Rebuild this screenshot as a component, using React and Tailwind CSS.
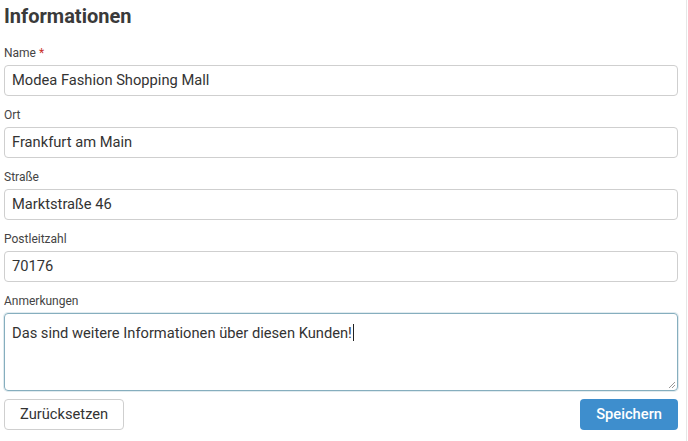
const fields = [
    { label: "Name", required: true, value: "Modea Fashion Shopping Mall" },
    { label: "Ort", value: "Frankfurt am Main" },
    { label: "Straße", value: "Marktstraße 46" },
    { label: "Postleitzahl", value: "70176" },
];

export default function App() {
    return (
        <div className="h-[441px] w-[688px] bg-white font-['Roboto',sans-serif] text-[#333]">
            <div className="h-full w-[687px] border-r border-[#e6e6e6] pl-[4px] pr-[8px]">
                <h2 className="h-[44px] pt-[2px] text-[20px] font-bold leading-[28px] text-[#3a3a3a]">Informationen</h2>

                {fields.map((f) => (
                    <div key={f.label} className="mb-[10px]">
                        <label className="mb-[4px] block h-[17px] pt-[1px] text-[12px] leading-[16px] text-[#444]">
                            {f.label}
                            {f.required && <span className="text-[#c9302c]"> *</span>}
                        </label>
                        <div className="flex h-[31px] items-center rounded-[4px] border border-[#cfcfcf] px-[7px] text-[14.7px] text-[#333]">
                            {f.value}
                        </div>
                    </div>
                ))}

                <div>
                    <label className="mb-[4px] block h-[17px] pt-[1px] text-[12px] leading-[16px] text-[#444]">Anmerkungen</label>
                    <div className="relative h-[78px] rounded-[4px] border border-[#86aebe] px-[7px] pt-[7px] text-[14.7px] leading-[22px] text-[#333] shadow-[0_0_0_1px_rgba(134,174,190,0.25)]">
                        Das sind weitere Informationen über diesen Kunden!
                        <span className="ml-[1px] inline-block h-[17px] w-px translate-y-[3px] bg-[#222]" />
                        <svg className="absolute bottom-[1px] right-[1px]" width="9" height="9" viewBox="0 0 9 9">
                            <path d="M8 2 L2 8 M8 5 L5 8" stroke="#999" strokeWidth="1" />
                        </svg>
                    </div>
                </div>

                <div className="mt-[8px] flex items-center justify-between">
                    <button className="h-[31px] rounded-[4px] border border-[#cfcfcf] bg-white px-[15px] text-[14.7px] text-[#333]">
                        Zurücksetzen
                    </button>
                    <button className="h-[31px] rounded-[4px] bg-[#3e8ecd] px-[16px] text-[14.7px] font-medium text-white">
                        Speichern
                    </button>
                </div>
            </div>
        </div>
    );
}
